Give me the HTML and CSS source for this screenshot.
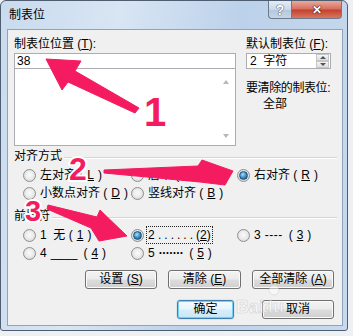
FILE: index.html
```html
<!DOCTYPE html>
<html lang="zh-CN">
<head>
    <meta charset="UTF-8">
    <title>制表位</title>
    <link rel="stylesheet" href="styles.css">
</head>
<body>
    <div class="window">
        <!-- Title bar -->
        <div class="titlebar">
            <span class="title">制表位</span>
            <div class="caption">
                <span class="cap-help">?</span>
                <span class="cap-close">✕</span>
            </div>
        </div>

        <div class="client">
            <!-- Tab stop position + defaults -->
            <div class="top">
                <div>
                    <div class="lbl">制表位位置 (<u>T</u>):</div>
                    <div class="combo-input">38</div>
                    <div class="combo-list">
                        <div class="scroll">
                            <span class="arr up"></span>
                            <span class="arr down"></span>
                        </div>
                    </div>
                </div>
                <div>
                    <div class="lbl">默认制表位 (<u>F</u>):</div>
                    <div class="spin">
                        <span>2 &nbsp;字符</span>
                        <div class="spin-btns">
                            <span class="spin-btn"><i class="tri up"></i></span>
                            <span class="spin-btn"><i class="tri down"></i></span>
                        </div>
                    </div>
                    <div class="clear-label">要清除的制表位:</div>
                    <div class="clear-value">全部</div>
                </div>
            </div>

            <!-- Alignment -->
            <div class="group-head"><span>对齐方式</span><i class="rule"></i></div>
            <div class="radios">
                <div class="radio"><span class="dot"></span>左对齐 (<u>L</u>)</div>
                <div class="radio"><span class="dot"></span>居中 (<u>C</u>)</div>
                <div class="radio"><span class="dot on"></span>右对齐 (<u>R</u>)</div>
                <div class="radio"><span class="dot"></span>小数点对齐 (<u>D</u>)</div>
                <div class="radio"><span class="dot"></span>竖线对齐 (<u>B</u>)</div>
            </div>

            <!-- Leader -->
            <div class="group-head lead"><span>前导符</span><i class="rule"></i></div>
            <div class="radios">
                <div class="radio"><span class="dot"></span>1 &nbsp;无 (<u>1</u>)</div>
                <div class="radio"><span class="dot on"></span><span class="focus">2 <span class="dots">......</span>(<u>2</u>)</span></div>
                <div class="radio"><span class="dot"></span>3 <span class="dashes">----</span>(<u>3</u>)</div>
                <div class="radio"><span class="dot"></span>4 <span class="line">____</span>(<u>4</u>)</div>
                <div class="radio"><span class="dot"></span>5 <span class="mid">·······</span>(<u>5</u>)</div>
            </div>

            <div class="btnrow">
                <span class="btn w-set">设置 (<u>S</u>)</span>
                <span class="btn w-clr">清除 (<u>E</u>)</span>
                <span class="btn w-all">全部清除 (<u>A</u>)</span>
            </div>
            <div class="btnrow last">
                <span class="btn default w-ok">确定</span>
                <span class="btn w-cancel">取消</span>
            </div>
        </div>
    </div>

    <!-- Annotations drawn over the dialog -->
    <svg class="marks" width="353" height="336" viewBox="0 0 353 336">
        <g class="watermark">
            <text x="236" y="313" class="wm-big">Bai</text>
            <text x="262" y="313" class="wm-big">du</text>
            <circle cx="274" cy="290" r="5"/>
        </g>
        <g class="arrow">
            <polygon points="46,59 81,61 75,71 139,108 135,113 68,82 62,90"/>
            <polygon points="104,170 198,166 202,160 233,171 225,185 200,182 104,173"/>
            <polygon points="48,205 97,217 100,210 127,236 99,241 91,228 47,209"/>
        </g>
        <g class="nums">
            <text x="155" y="126" font-size="40">1</text>
            <text x="78" y="180" font-size="32">2</text>
            <text x="33" y="221" font-size="29">3</text>
        </g>
    </svg>
</body>
</html>
```

FILE: styles.css
```css
* {
    box-sizing: border-box;
}
body {
    margin: 0;
    width: 353px;
    height: 336px;
    overflow: hidden;
    position: relative;
    background-color: #eef0f3;
    font-family: "Liberation Sans", "Noto Sans CJK SC", sans-serif;
    font-size: 12px;
    color: #000;
}
u {
    text-decoration: underline;
    text-underline-offset: 1px;
}

/* window frame */
.window {
    width: 348px;
    height: 331px;
    border: 1px solid #4f5d70;
    border-radius: 6px 6px 3px 3px;
    padding: 0 4px 4px 6px;
    background: linear-gradient(100deg, #c9dbee 0%, #d8e5f3 30%, #bcd2ea 60%, #c7d9ed 100%);
    display: flex;
    flex-direction: column;
}
.titlebar {
    height: 28px;
    display: flex;
    align-items: flex-start;
}
.title {
    padding: 7px 0 0 2px;
    line-height: 14px;
}
.caption {
    margin-left: auto;
    margin-right: 1px;
    display: flex;
}
.cap-help, .cap-close {
    height: 18px;
    display: flex;
    align-items: center;
    justify-content: center;
    color: #fff;
    font-weight: bold;
    border: 1px solid #6c7a8c;
    border-top: none;
}
.cap-help {
    width: 23px;
    font-size: 14px;
    border-radius: 0 0 0 4px;
    border-right: none;
    background: linear-gradient(#e4edf7, #c9d8e9 50%, #b3c6dc 51%, #c5d6e8);
    text-shadow: 0 0 1px #334, 0 0 1px #334;
}
.cap-close {
    width: 51px;
    font-size: 12px;
    border-radius: 0 0 4px 0;
    background: linear-gradient(#e9a99c, #d66d5c 48%, #c4402d 52%, #d9775f);
    text-shadow: 0 0 1px #311, 0 0 1px #311, 0 0 1px #311;
}

/* client area */
.client {
    flex: 1;
    border: 1px solid #8ea3bc;
    background-color: #f0f0f0;
    padding: 6px 8px 0 6px;
}
.top {
    display: grid;
    grid-template-columns: 222px 85px;
    column-gap: 10px;
}
.lbl {
    line-height: 14px;
    height: 14px;
    margin: 1px 0 2px;
    white-space: nowrap;
}
.combo-input {
    height: 16px;
    border: 1px solid #abadb3;
    background: #fff;
    padding-left: 2px;
    line-height: 14px;
}
.combo-list {
    height: 77px;
    border: 1px solid #abadb3;
    border-top: none;
    background: #fff;
    display: flex;
    justify-content: flex-end;
}
.scroll {
    width: 17px;
    display: flex;
    flex-direction: column;
    justify-content: space-between;
    padding-top: 5px;
}
.arr {
    height: 17px;
    position: relative;
}
.arr::after {
    content: "";
    position: absolute;
    left: 5px;
    top: 6px;
    border-left: 3px solid transparent;
    border-right: 3px solid transparent;
}
.arr.up::after {
    border-bottom: 4px solid #b8b8b8;
}
.arr.down::after {
    border-top: 4px solid #b8b8b8;
}

.spin {
    height: 16px;
    border: 1px solid #abadb3;
    background: #fff;
    display: flex;
    align-items: center;
    padding-left: 3px;
    line-height: 14px;
}
.spin-btns {
    margin-left: auto;
    margin-right: 1px;
    width: 13px;
    height: 14px;
    display: flex;
    flex-direction: column;
}
.spin-btn {
    flex: 1;
    border: 1px solid #c5c5c5;
    background: linear-gradient(#f5f5f5, #dedede);
    display: flex;
    align-items: center;
    justify-content: center;
}
.tri {
    border-left: 3px solid transparent;
    border-right: 3px solid transparent;
}
.tri.up {
    border-bottom: 3px solid #555;
}
.tri.down {
    border-top: 3px solid #555;
}
.clear-label {
    margin-top: 11px;
    line-height: 16px;
    white-space: nowrap;
    letter-spacing: -0.4px;
}
.clear-value {
    padding-left: 17px;
    line-height: 16px;
}

/* groups */
.group-head {
    display: flex;
    align-items: center;
    line-height: 14px;
    margin-top: 3px;
}
.group-head.lead {
    margin-top: 7px;
}
.rule {
    flex: 1;
    height: 1px;
    margin: 2px -3px 0 2px;
    background-color: #d5d5d5;
    box-shadow: 0 1px 0 #fff;
}
.radios {
    display: grid;
    grid-template-columns: 108px 106px auto;
    margin: 3px 0 0 9px;
}
.radio {
    height: 18px;
    display: flex;
    align-items: center;
    gap: 4px;
    line-height: 14px;
    white-space: nowrap;
}
.dot {
    width: 13px;
    height: 13px;
    flex: none;
    border-radius: 50%;
    border: 1px solid #8e8f8f;
    background: radial-gradient(circle at 50% 45%, #fbfbfb 0%, #ececec 45%, #cfcfcf 100%);
    display: flex;
    align-items: center;
    justify-content: center;
}
.dot.on::after {
    content: "";
    width: 7px;
    height: 7px;
    border-radius: 50%;
    border: 1px solid #1d4f7a;
    background: radial-gradient(circle at 40% 35%, #a6e0fb 0%, #3d8dc6 50%, #124a74 100%);
}
.focus {
    outline: 1px dotted #222;
    outline-offset: 1px;
}
.dots {
    letter-spacing: 3px;
}
.dashes {
    letter-spacing: 0.5px;
    margin-right: 2px;
}
.line {
    margin-right: 2px;
}
.mid {
    font-weight: bold;
    letter-spacing: -0.5px;
    margin-right: 2px;
}

/* buttons */
.btnrow {
    display: flex;
    justify-content: flex-end;
    gap: 11px;
    margin-top: 8px;
}
.btnrow.last {
    gap: 28px;
    margin-top: 11px;
}
.btn {
    height: 19px;
    line-height: 17px;
    text-align: center;
    border: 1px solid #707070;
    border-radius: 3px;
    background: linear-gradient(#f3f3f3, #ebebeb 48%, #dddddd 52%, #cfcfcf);
    box-shadow: inset 0 0 0 1px #fbfbfb;
}
.btn.default {
    border-color: #3c7fb1;
    background: linear-gradient(#f4fbfe, #e6f5fc 48%, #d7eefa 52%, #c8e6f6);
    box-shadow: inset 0 0 0 1px #6bd4f8, 0 0 1px #3c7fb1;
}
.w-set { width: 72px; }
.w-clr { width: 73px; }
.w-all { width: 82px; }
.w-ok { width: 57px; }
.w-cancel { width: 72px; }

/* annotations */
.marks {
    position: absolute;
    left: 0;
    top: 0;
    pointer-events: none;
}
.arrow polygon {
    fill: #f41b60;
    stroke: #f41b60;
    stroke-width: 1;
    stroke-linejoin: round;
}
.nums text {
    font-weight: bold;
    text-anchor: middle;
    fill: #f41b60;
    stroke: #fff;
    stroke-width: 4;
    stroke-linejoin: round;
    paint-order: stroke;
}
.watermark {
    opacity: 0.5;
}
.watermark text, .watermark circle {
    fill: #fff;
    stroke: #b5b5b5;
    stroke-width: 0.6;
}
.wm-big {
    font-size: 18px;
    font-weight: bold;
}
```
